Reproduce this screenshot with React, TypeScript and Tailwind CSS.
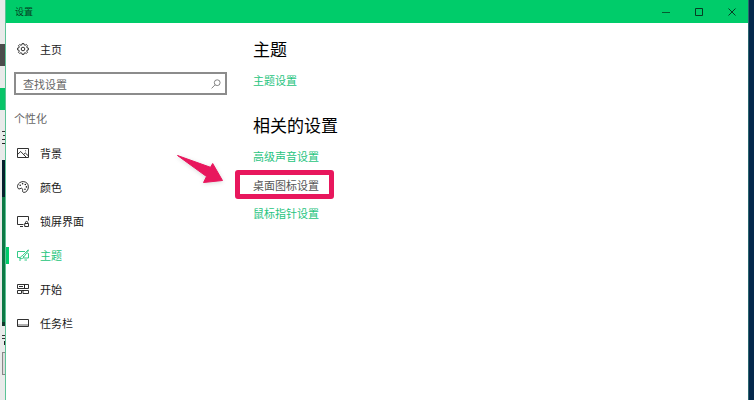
import type { ReactNode } from "react";

function Icon({ children }: { children: ReactNode }) {
  return (
    <svg
      viewBox="0 0 12 12"
      className="h-3 w-3 shrink-0"
      fill="none"
      stroke="currentColor"
      strokeWidth="0.9"
      aria-hidden="true"
    >
      {children}
    </svg>
  );
}

const gear = (
  <Icon>
    <path d="M5.1 .6h1.8l.3 1.3.9.4 1.2-.8 1.2 1.2-.8 1.2.4.9 1.3.3v1.8l-1.3.3-.4.9.8 1.2-1.2 1.2-1.2-.8-.9.4-.3 1.3H5.1l-.3-1.3-.9-.4-1.2.8-1.2-1.2.8-1.2-.4-.9L.6 6.900V5.100l1.3-.3.4-.9-.8-1.2 1.2-1.2 1.2.8.9-.4z" />
    <circle cx="6" cy="6" r="1.8" />
  </Icon>
);

const picture = (
  <Icon>
    <path d="M.5 1.500h11v9H.5z M.5 7.500 3.700 4.500l5.300 5.500 M6.700 7.400 8.300 6l3.200 3" />
    <circle cx="8.600" cy="3.800" r="0.500" fill="currentColor" stroke="none" />
  </Icon>
);

const palette = (
  <Icon>
    <path d="M.6 4.600C1.300 2.100 3.600.6 6.200.6c3 0 5.200 2.200 5.200 5.200 0 3.200-2.200 5.600-4.300 5.600-1.500 0-1.700-1.100-1.500-2.100.2-1.200-.4-2.300-1.500-2.100-.9.100-1.200 1-2.100.8C.8 7.700.3 6 .6 4.600z" />
    <g fill="currentColor" stroke="none">
      <circle cx="3.200" cy="4.200" r="0.800" />
      <circle cx="5.600" cy="2.700" r="0.800" />
      <circle cx="8.300" cy="3.500" r="0.800" />
      <circle cx="9.400" cy="5.900" r="0.800" />
      <circle cx="8" cy="8.300" r="0.800" />
    </g>
  </Icon>
);

const lockScreen = (
  <Icon>
    <path d="M6.500 9.500H.5v-8h11v4 M3 11.500h3" />
    <path d="M7.700 8.500h3.800v3H7.700z M8.500 8.500v-1a1.100 1.100 0 0 1 2.200 0v1" />
  </Icon>
);

const brush = (
  <Icon>
    <path d="M8 2.500H.5v6H3 M10.500 4.500h1v4.500H6.500 M2 11h2 M7.500 11H10" />
    <path d="M11.300.8 5.500 6.600l1.300 1.300 4.700-6.300z M5.500 6.600C4 6.700 4 8.500 2.700 9.500c2 .4 3.900 0 4.100-1.600" />
  </Icon>
);

const tiles = (
  <Icon>
    <path d="M.5 1.500h7v4h-7z M7.500 1.500h4v4h-4z M.5 7.500h4v3h-4z M6 7.500h5.500v3H6z M2 3.500h4 M4.500 7.500h2" />
  </Icon>
);

const taskbar = (
  <Icon>
    <path d="M.5 2.500h11v7H.5z" />
    <path d="M.5 8h11" strokeWidth="0.700" />
  </Icon>
);

const items = [
  { label: "背景", icon: picture },
  { label: "颜色", icon: palette },
  { label: "锁屏界面", icon: lockScreen },
  { label: "主题", icon: brush, active: true },
  { label: "开始", icon: tiles },
  { label: "任务栏", icon: taskbar },
];

function Backdrop() {
  return (
    <div className="flex w-[5px] shrink-0 flex-col overflow-hidden bg-[#e9ebea]" aria-hidden="true">
      <div className="h-11" />
      <div className="h-[22px] bg-[#4b4d4c]" />
      <div className="h-[22px]" />
      <div className="h-[22px] bg-[#08c468]" />
      <div className="flex h-[50px] flex-col items-end gap-[3px] pt-[21px]">
        <i className="h-px w-[3px] bg-[#333]" />
        <i className="h-px w-[2px] bg-[#333]" />
        <i className="h-px w-[3px] bg-[#333]" />
        <i className="h-px w-[3px] bg-[#222]" />
      </div>
      <div className="ml-[2px] h-[37px] bg-[#04202c]" />
      <div className="ml-[2px] h-[125px] bg-[#0d7845]" />
      <div className="ml-[2px] h-1 bg-[#12382a]" />
      <div className="flex h-[26px] flex-col items-end gap-[2px] pt-[9px]">
        <i className="h-px w-[3px] bg-[#333]" />
        <i className="h-px w-[3px] bg-[#333]" />
        <i className="h-1 w-px bg-[#222]" />
      </div>
      <div className="ml-[2px] h-[23px] border border-r-0 border-[#888] bg-[#dcdcdc]" />
    </div>
  );
}

function TitleBar() {
  return (
    <header className="flex h-[23px] items-center justify-between bg-[#00cc6a] pl-[9px] text-[#063d23]">
      <span className="text-[9px] leading-3">设置</span>
      <div className="flex">
        <button aria-label="最小化" className="flex h-[23px] w-[33px] items-center justify-center">
          <svg viewBox="0 0 8 8" className="h-2 w-2" stroke="currentColor" strokeWidth="0.800" aria-hidden="true">
            <path d="M0 4.500h8" />
          </svg>
        </button>
        <button aria-label="最大化" className="flex h-[23px] w-[33px] items-center justify-center">
          <svg viewBox="0 0 8 8" className="h-2 w-2" fill="none" stroke="currentColor" aria-hidden="true">
            <path d="M.5.5h7v7h-7z" />
          </svg>
        </button>
        <button aria-label="关闭" className="flex h-[23px] w-[33px] items-center justify-center">
          <svg viewBox="0 0 8 8" className="h-2 w-2" stroke="currentColor" aria-hidden="true">
            <path d="M.5.5l7 7M7.500.5l-7 7" />
          </svg>
        </button>
      </div>
    </header>
  );
}

function Sidebar() {
  return (
    <aside className="w-[221px] shrink-0">
      <button className="mt-[15px] flex h-[22px] items-center gap-[11px] pl-[11px] text-[11px] leading-4">
        {gear}
        主页
      </button>
      <div className="mt-3 ml-[8px] flex h-[23px] items-center border-2 border-[#8c8c8c] pr-[4px] pl-[7px]">
        <input
          type="text"
          aria-label="查找设置"
          placeholder="查找设置"
          className="h-4 min-w-0 flex-1 bg-transparent text-[11px] leading-4 outline-none placeholder:text-[#666]"
        />
        <svg viewBox="0 0 10 10" className="h-[10px] w-[10px]" fill="none" stroke="#777" strokeWidth="0.900" aria-hidden="true">
          <circle cx="6.200" cy="3.700" r="2.900" />
          <path d="M4.100 5.800.6 9.400" />
        </svg>
      </div>
      <h2 className="mt-[15px] pl-[8px] text-[11px] leading-4 text-[#666]">个性化</h2>
      <nav className="mt-[10px]">
        {items.map((item) => (
          <a
            key={item.label}
            href="#"
            aria-current={item.active ? "page" : undefined}
            className={
              item.active
                ? "flex h-[34px] items-center text-[11px] leading-4 text-[#1cc47a]"
                : "flex h-[34px] items-center text-[11px] leading-4 text-[#1a1a1a]"
            }
          >
            <span className={item.active ? "mr-2 h-[17px] w-[3px] bg-[#00cc6a]" : "mr-2 h-[17px] w-[3px]"} />
            {item.icon}
            <span className="ml-[11px]">{item.label}</span>
          </a>
        ))}
      </nav>
    </aside>
  );
}

function Arrow() {
  return (
    <svg viewBox="0 0 48 30" className="absolute top-[-16px] left-[-59px] h-[30px] w-12 drop-shadow-sm" aria-hidden="true">
      <path d="M1.500 1.500 34.500 13.300 36.700 9.500 46.500 26.500 27.500 28.500 30.500 22.500z" fill="#e8175d" stroke="#e8175d" strokeLinejoin="round" />
    </svg>
  );
}

function Content() {
  return (
    <main className="flex min-w-0 flex-1 flex-col items-start pl-[26px]">
      <h1 className="mt-[15px] text-[17px] leading-[22px] text-black">主题</h1>
      <a href="#" className="mt-3 text-[11px] leading-4 text-[#1fc480]">主题设置</a>
      <h1 className="mt-[26px] text-[17px] leading-[22px] text-black">相关的设置</h1>
      <a href="#" className="mt-3 text-[11px] leading-4 text-[#1fc480]">高级声音设置</a>
      <div className="relative my-[6px] -ml-[18px]">
        <Arrow />
        <a
          href="#"
          className="flex h-[29px] w-[99px] items-center rounded-[3px] border-[5px] border-[#e8175d] pl-[13px] text-[11px] leading-4 whitespace-nowrap text-[#555]"
        >
          桌面图标设置
        </a>
      </div>
      <a href="#" className="text-[11px] leading-4 text-[#1fc480]">鼠标指针设置</a>
    </main>
  );
}

export default function App() {
  return (
    <div className="flex min-h-screen bg-[#04284c] font-['Noto_Sans_CJK_SC',sans-serif] text-[#1a1a1a]">
      <Backdrop />
      <div className="flex min-w-0 flex-1 flex-col border-l border-[#5cc396] bg-white">
        <TitleBar />
        <div className="flex flex-1">
          <Sidebar />
          <Content />
        </div>
      </div>
      <div className="w-[6px] shrink-0 border-l border-[#2c6670] bg-[#04284c]" aria-hidden="true" />
    </div>
  );
}
